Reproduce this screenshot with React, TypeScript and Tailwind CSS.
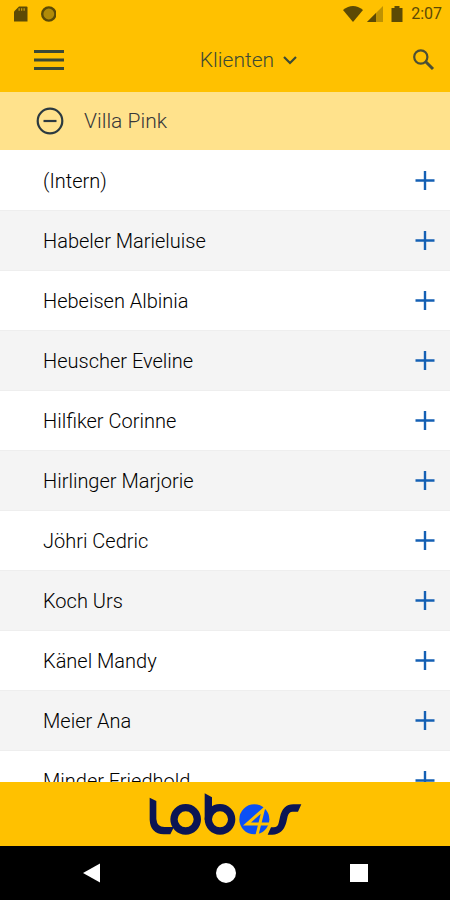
import { useState } from "react";

const clients = [
  "(Intern)",
  "Habeler Marieluise",
  "Hebeisen Albinia",
  "Heuscher Eveline",
  "Hilfiker Corinne",
  "Hirlinger Marjorie",
  "Jöhri Cedric",
  "Koch Urs",
  "Känel Mandy",
  "Meier Ana",
  "Minder Friedhold",
];

const StatusBar = () => (
  <div className="flex h-7 shrink-0 items-center justify-between pl-3 pr-2 text-[#5c4a05]">
    <div className="flex items-center gap-3">
      <svg className="h-4 w-4" viewBox="0 0 16 16" fill="currentColor">
        <path d="M7 .5h7.500q1 0 1 1v14h-13.500V5.500z" />
        <path d="M6.500 2.200h1.300v2.600H6.500zM9 2.200h1.300v2.600H9zM11.500 2.200h1.300v2.600h-1.300z" fill="#c39a10" />
      </svg>
      <svg className="h-4 w-4" viewBox="0 0 16 16">
        <circle cx="8.800" cy="8" r="6.600" fill="#b08a08" stroke="#5c4a05" strokeWidth="2.400" />
      </svg>
    </div>
    <div className="flex items-center">
      <svg className="h-4 w-5" viewBox="0 0 20 16" fill="currentColor">
        <path d="M0 4Q10-4 20 4L10 16z" />
      </svg>
      <svg className="ml-1 h-4 w-4" viewBox="0 0 16 16" fill="currentColor">
        <path d="M0 16L16 0v16z" opacity="0.4" />
        <path d="M0 16l9-9v9z" />
      </svg>
      <svg className="ml-2 h-4 w-3" viewBox="0 0 12 16" fill="currentColor">
        <path d="M3.500 0h5v2H11.500v14H.5V2h3z" />
      </svg>
      <span className="ml-2 text-base leading-5">2:07</span>
    </div>
  </div>
);

const Logo = () => (
  <svg className="h-[42px] w-[154px]" viewBox="55 36 462 126" role="img" aria-label="Lobos">
    <g fill="#0b1554">
      <path d="M60 50L80 60V114Q82 138 104 138H133L122 160H102Q62 158 60 116z" />
      <path d="M225 37L247 49V116H225z" />
      <path d="M515 70L505 92H489Q477 92 474 106L470 124Q460 161 428 161H414L424 139H432Q444 139 447 126L451 108Q459 70 491 70z" />
    </g>
    <circle cx="168" cy="115" r="35" fill="none" stroke="#0b1554" strokeWidth="22" />
    <circle cx="271" cy="115" r="35" fill="none" stroke="#0b1554" strokeWidth="22" />
    <circle cx="374" cy="115" r="45" fill="#0b50f5" />
    <path d="M382 162L401 86L352 129H424" fill="none" stroke="#ffc100" strokeWidth="9" />
  </svg>
);

const App = () => {
  const [open, setOpen] = useState(true);

  return (
    <div className="flex h-screen flex-col overflow-hidden bg-white font-['Roboto',sans-serif]">
      <header className="shrink-0 bg-[#ffc100]">
        <StatusBar />
        <div className="grid h-16 grid-cols-[1fr_auto_1fr] items-center pl-8 pr-3">
          <button aria-label="Menu" className="justify-self-start">
            <svg className="h-8 w-8" viewBox="0 0 32 32" stroke="#3c4a35" strokeWidth="3">
              <path d="M2 7.500h30M2 16h30M2 24.500h30" />
            </svg>
          </button>
          <button className="flex items-center gap-1 pl-8 text-[21px] leading-6 font-light text-[#3c4a35]">
            Klienten
            <svg className="mx-1 h-4 w-4" viewBox="0 0 16 16" fill="none" stroke="currentColor" strokeWidth="2.200">
              <path d="M2 5l6 6 6-6" />
            </svg>
          </button>
          <button aria-label="Suchen" className="justify-self-end">
            <svg className="h-7 w-7" viewBox="0 0 28 28" fill="none" stroke="#4b4f35">
              <circle cx="10.800" cy="11" r="6.600" strokeWidth="2.200" />
              <path d="M15.500 15.500l7.500 7.500" strokeWidth="3" />
            </svg>
          </button>
        </div>
      </header>

      <button
        aria-expanded={open}
        onClick={() => setOpen(!open)}
        className="flex h-[58px] shrink-0 items-center gap-5 bg-[#ffe28c] pl-9 text-left text-[21px] leading-6 font-light text-[#37383a]"
      >
        <svg className="h-7 w-7" viewBox="0 0 28 28" fill="none" stroke="#2c3a40" strokeWidth="2.200">
          <circle cx="14" cy="14" r="12.300" />
          <path d="M7.500 14h13" />
          {!open && <path d="M14 7.500v13" />}
        </svg>
        Villa Pink
      </button>

      <ul className="min-h-0 flex-1 overflow-hidden">
        {open &&
          clients.map((name) => (
            <li
              key={name}
              className="flex h-[60px] items-center justify-between border-t border-[#eeeeee] pl-[43px] pr-[15px] first:border-transparent even:bg-[#f4f4f4]"
            >
              <span className="text-xl leading-6 font-light text-black">{name}</span>
              <button aria-label={`${name} hinzufügen`}>
                <svg className="h-5 w-5" viewBox="0 0 20 20" stroke="#1460b4" strokeWidth="2.400">
                  <path d="M.5 9.500h19M10 0v19" />
                </svg>
              </button>
            </li>
          ))}
      </ul>

      <footer className="shrink-0">
        <div className="flex h-16 items-center justify-center bg-[#ffc100]">
          <Logo />
        </div>
        <nav className="flex h-[54px] items-center justify-between bg-black px-[82px]">
          <button aria-label="Zurück">
            <svg className="h-5 w-5" viewBox="0 0 20 20" fill="#fff">
              <path d="M1 10L18 .5v19z" />
            </svg>
          </button>
          <button aria-label="Home" className="h-5 w-5 rounded-full bg-white" />
          <button aria-label="Übersicht" className="h-[18px] w-[18px] bg-white" />
        </nav>
      </footer>
    </div>
  );
};

export default App;
